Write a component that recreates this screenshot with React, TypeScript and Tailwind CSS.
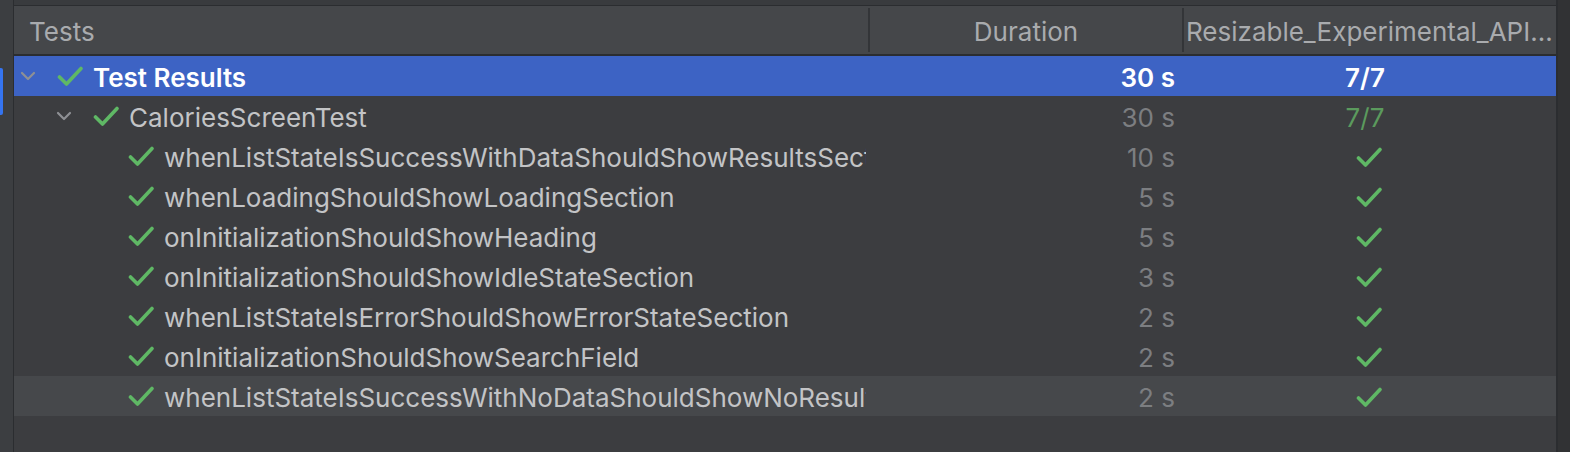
const tests = [
  { name: "whenListStateIsSuccessWithDataShouldShowResultsSection", time: "10 s" },
  { name: "whenLoadingShouldShowLoadingSection", time: "5 s" },
  { name: "onInitializationShouldShowHeading", time: "5 s" },
  { name: "onInitializationShouldShowIdleStateSection", time: "3 s" },
  { name: "whenListStateIsErrorShouldShowErrorStateSection", time: "2 s" },
  { name: "onInitializationShouldShowSearchField", time: "2 s" },
  { name: "whenListStateIsSuccessWithNoDataShouldShowNoResultsSection", time: "2 s" },
];

function Check() {
  return (
    <svg width="26" height="21" viewBox="0 0 26 21" className="shrink-0">
      <polyline
        points="2.5,11 9.5,18 24,2.5"
        fill="none"
        stroke="#5fb865"
        strokeWidth="3.6"
        strokeLinecap="round"
        strokeLinejoin="round"
      />
    </svg>
  );
}

function Chevron() {
  return (
    <svg width="16" height="10" viewBox="0 0 16 10" className="shrink-0">
      <polyline
        points="2,2 8,8 14,2"
        fill="none"
        stroke="#8e9094"
        strokeWidth="2.2"
        strokeLinecap="round"
        strokeLinejoin="round"
      />
    </svg>
  );
}

function Row({
  indent,
  chevron,
  label,
  time,
  result,
  variant,
}: {
  indent: string;
  chevron?: boolean;
  label: string;
  time: string;
  result: "check" | string;
  variant: "selected" | "group" | "leaf" | "hover";
}) {
  const bg =
    variant === "selected" ? "bg-[#3d63c4]" : variant === "hover" ? "bg-[#46484b]" : "";
  const labelCls =
    variant === "selected" ? "text-white font-semibold" : "text-[#c3c4c6]";
  const timeCls =
    variant === "selected" ? "text-white font-semibold" : "text-[#7c7e81]";
  return (
    <div className={`flex h-[40px] items-center ${bg}`}>
      <div className="w-[854px] pr-[2px]">
        <div className={`flex h-[40px] items-center overflow-hidden whitespace-nowrap ${indent}`}>
          {chevron && (
            <div className="mr-[21px] flex w-[16px]">
              <Chevron />
            </div>
          )}
          <Check />
          <span className={`ml-[10px] pt-[3px] ${labelCls}`}>{label}</span>
        </div>
      </div>
      <div className={`w-[314px] pr-[7px] pt-[3px] text-right ${timeCls}`}>{time}</div>
      <div className="flex w-[374px] justify-center">
        {result === "check" ? (
          <div className="pt-[2px]">
            <Check />
          </div>
        ) : (
          <span
            className={`pt-[3px] pr-[8px] ${
              variant === "selected" ? "font-semibold text-white" : "text-[#5b9a5d]"
            }`}
          >
            {result}
          </span>
        )}
      </div>
    </div>
  );
}

export default function App() {
  return (
    <div
      className="flex h-[452px] w-[1570px] overflow-hidden bg-[#3c3e41] text-[26px] leading-normal"
      style={{ fontFamily: "Inter, 'Noto Sans', sans-serif" }}
    >
      <div className="flex w-[13px] shrink-0 flex-col pt-[68px]">
        <div className="h-[47px] w-[3px] rounded-r-[2px] bg-[#3574f0]" />
      </div>
      <div className="w-[1px] shrink-0 bg-[#2b2d30]" />
      <div className="flex flex-1 flex-col">
        <div className="h-[5px] bg-[#393b3e]" />
        <div className="h-[1px] bg-[#2b2d30]" />
        <div className="flex h-[48px] items-center bg-[#45474a] text-[#a9abae]">
          <div className="flex h-full w-[854px] items-center pl-[15px] pt-[2px]">Tests</div>
          <div className="h-[44px] w-[2px] bg-[#333538]" />
          <div className="flex h-full w-[312px] items-center justify-center pt-[2px]">Duration</div>
          <div className="h-[44px] w-[2px] bg-[#333538]" />
          <div className="flex h-full flex-1 items-center overflow-hidden whitespace-nowrap pl-[2px] pt-[2px]">
            Resizable_Experimental_API...
          </div>
        </div>
        <div className="h-[2px] bg-[#2b2d30]" />
        <div className="flex-1 bg-[#3c3d40]">
          <Row indent="pl-[6px]" chevron label="Test Results" time="30 s" result="7/7" variant="selected" />
          <Row indent="pl-[42px]" chevron label="CaloriesScreenTest" time="30 s" result="7/7" variant="group" />
          {tests.map((t, i) => (
            <Row
              key={t.name}
              indent="pl-[114px]"
              label={t.name}
              time={t.time}
              result="check"
              variant={i === tests.length - 1 ? "hover" : "leaf"}
            />
          ))}
        </div>
      </div>
      <div className="w-[2px] shrink-0 bg-[#2b2d30]" />
      <div className="w-[12px] shrink-0 bg-[#313234]" />
    </div>
  );
}
